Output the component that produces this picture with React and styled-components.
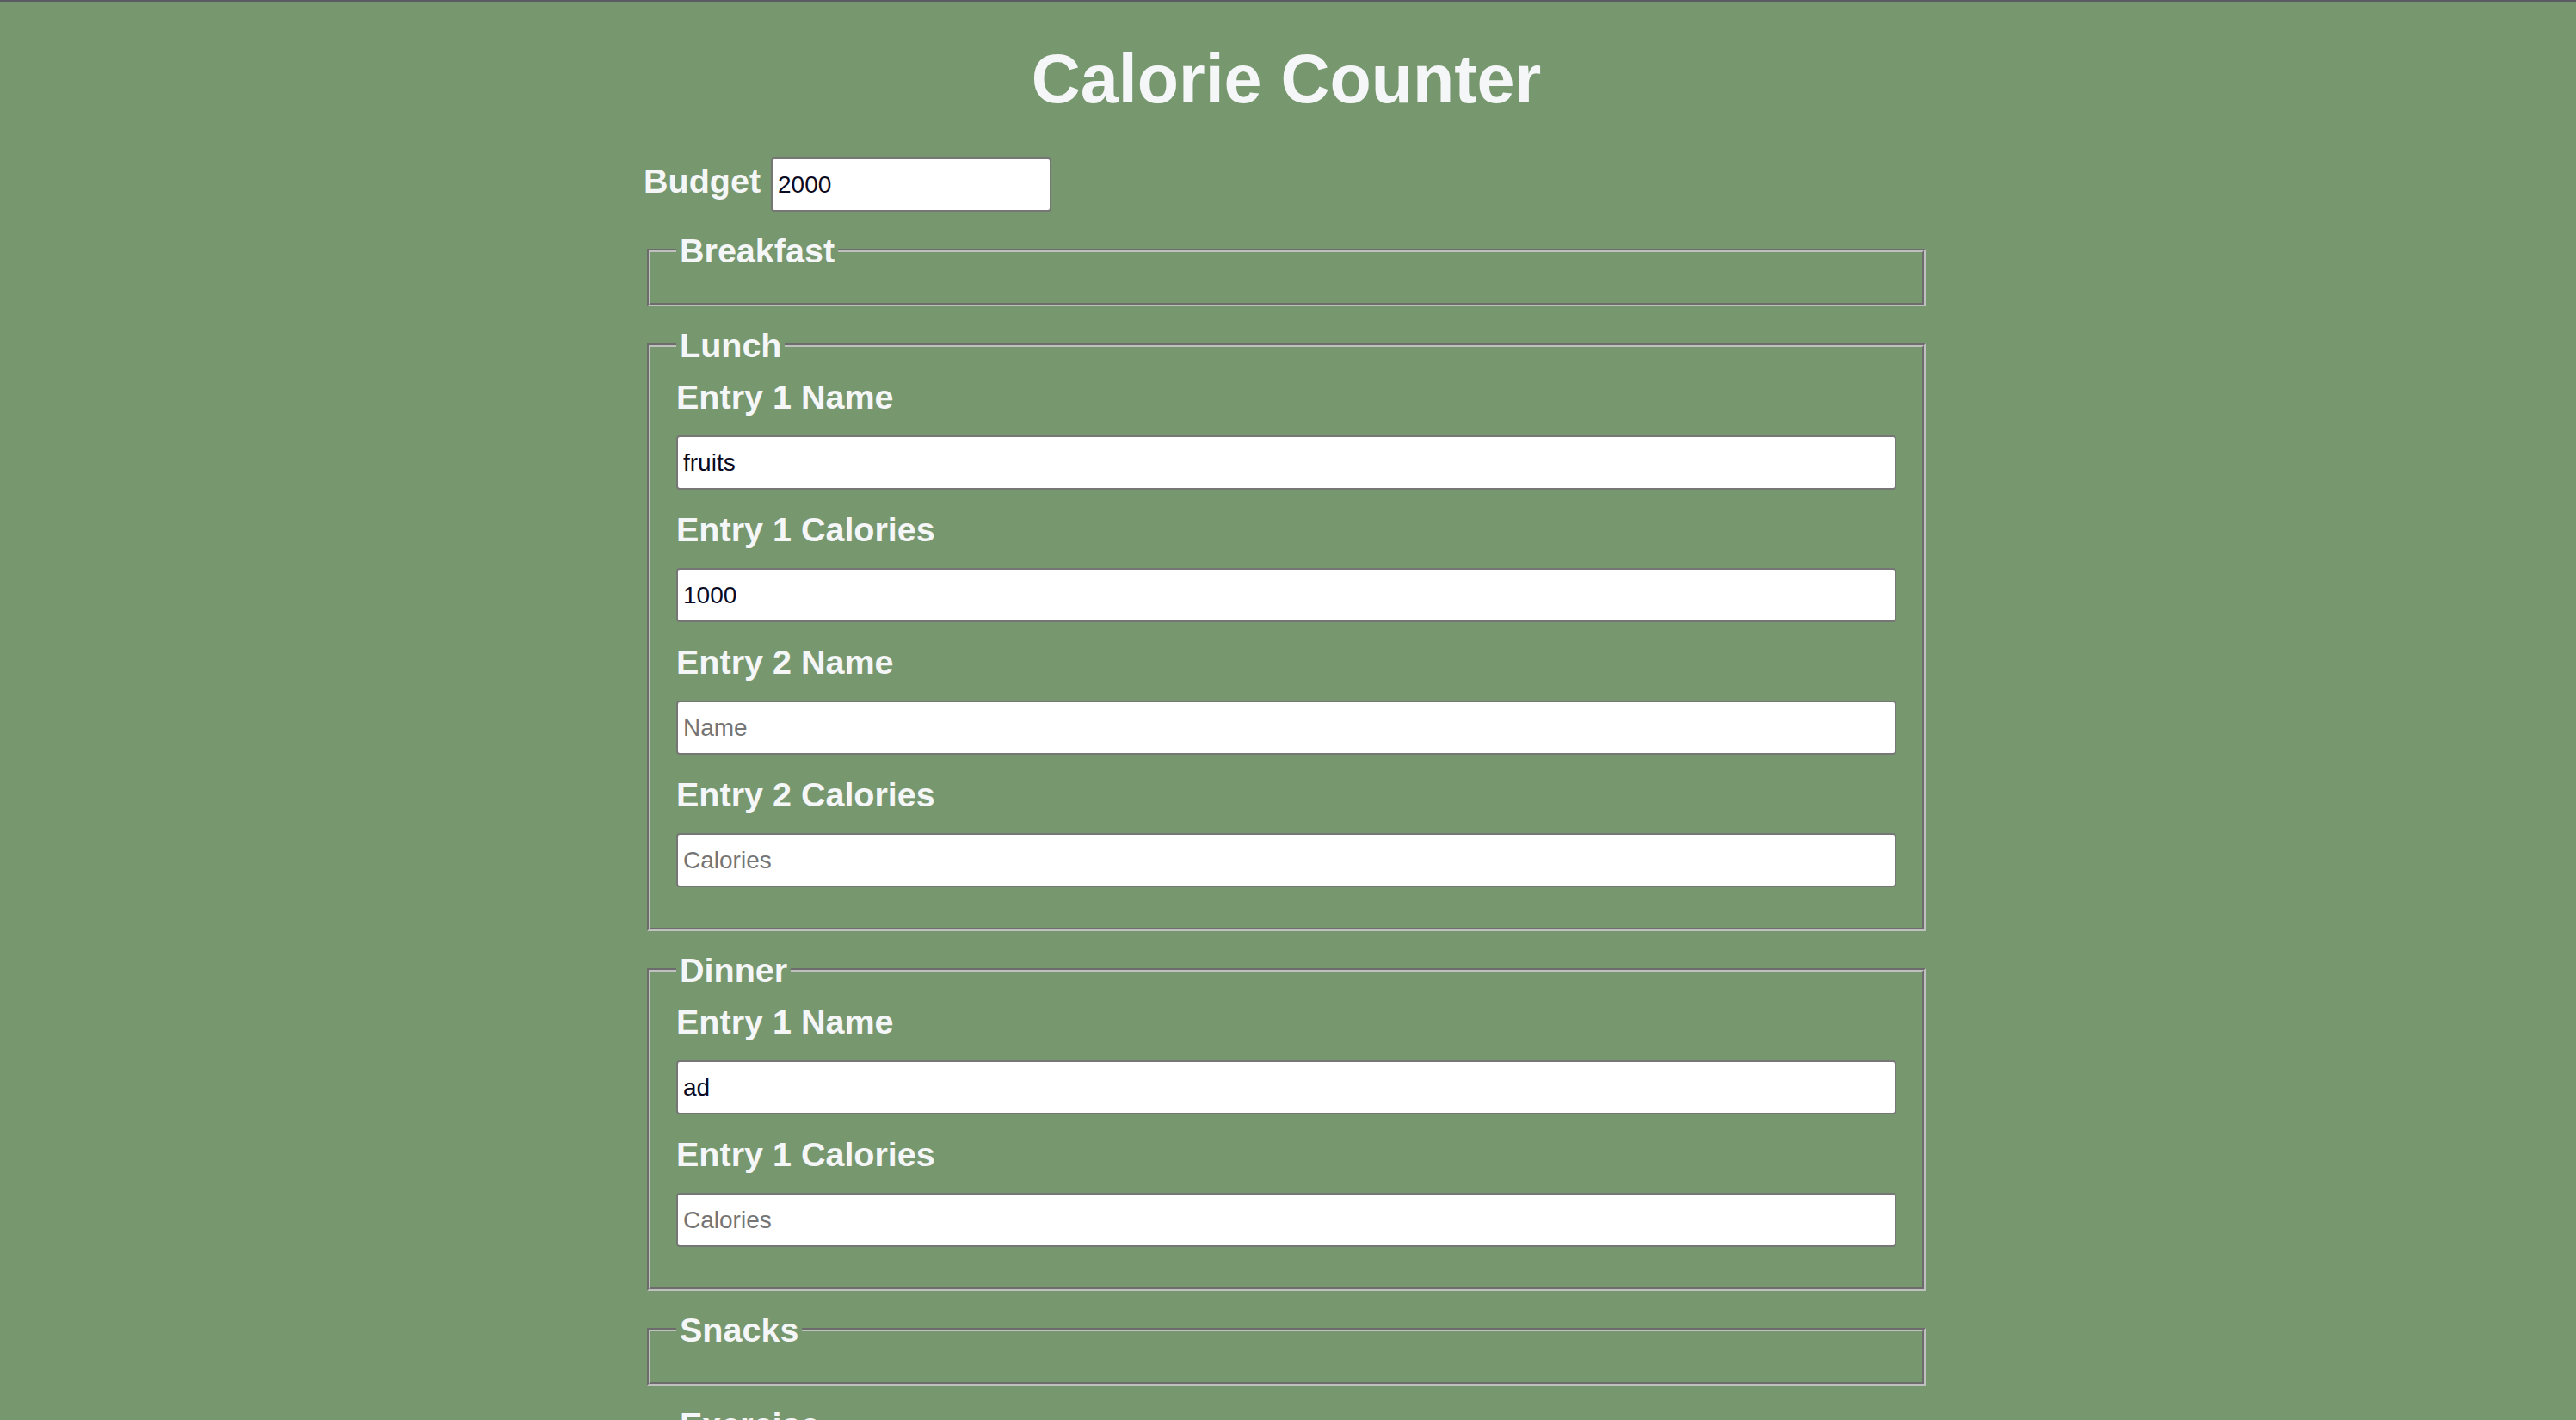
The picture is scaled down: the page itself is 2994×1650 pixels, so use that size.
import React from 'react';
import styled, { createGlobalStyle } from 'styled-components';

const GlobalStyle = createGlobalStyle`
  html, body {
    margin: 0;
    padding: 0;
  }

  body {
    background-color: #77976f;
    border-top: 2px solid #5a5a62;
    color: #f5f6f7;
    font-family: "Liberation Sans", Arial, Helvetica, sans-serif;
  }
`;

const meals = [
  { name: 'Breakfast', entries: [] },
  {
    name: 'Lunch',
    entries: [
      { name: 'fruits', calories: '1000' },
      { name: '', calories: '' },
    ],
  },
  { name: 'Dinner', entries: [{ name: 'ad', calories: '' }] },
  { name: 'Snacks', entries: [] },
  { name: 'Exercise', entries: [] },
];

export default function App() {
  return (
    <>
      <GlobalStyle />
      <Page>
        <Container>
          <Title>Calorie Counter</Title>
          <Form onSubmit={(e) => e.preventDefault()}>
            <BudgetRow>
              <Label htmlFor="budget">Budget</Label>
              <BudgetInput id="budget" type="number" defaultValue="2000" />
            </BudgetRow>
            {meals.map((meal) => (
              <MealSet key={meal.name}>
                <Legend>{meal.name}</Legend>
                {meal.entries.map((entry, i) => {
                  const id = `${meal.name.toLowerCase()}-${i + 1}`;
                  return (
                    <React.Fragment key={id}>
                      <EntryLabel htmlFor={`${id}-name`}>Entry {i + 1} Name</EntryLabel>
                      <EntryInput
                        id={`${id}-name`}
                        type="text"
                        placeholder="Name"
                        defaultValue={entry.name}
                      />
                      <EntryLabel htmlFor={`${id}-calories`}>Entry {i + 1} Calories</EntryLabel>
                      <EntryInput
                        id={`${id}-calories`}
                        type="number"
                        placeholder="Calories"
                        defaultValue={entry.calories}
                      />
                    </React.Fragment>
                  );
                })}
              </MealSet>
            ))}
          </Form>
        </Container>
      </Page>
    </>
  );
}

const Page = styled.div`
  padding-right: 4px;
`;

const Container = styled.main`
  width: 1494px;
  margin: 0 auto;
`;

const Title = styled.h1`
  margin: 44px 0 45px;
  font-size: 79px;
  line-height: 92px;
  font-weight: 700;
  text-align: center;
`;

const Form = styled.form`
  display: flex;
  flex-direction: column;
  gap: 22px;
`;

const BudgetRow = styled.div`
  display: flex;
  align-items: baseline;
  gap: 12px;
`;

const Label = styled.label`
  font-size: 39.5px;
  font-weight: 700;
  line-height: 46px;
`;

const baseInput = `
  box-sizing: border-box;
  height: 63px;
  padding: 0 6px;
  border: 2px solid #767676;
  border-radius: 4px;
  background: #ffffff;
  color: #0a0a23;
  font-family: "Liberation Sans", Arial, Helvetica, sans-serif;
  font-size: 28px;
  outline: none;

  &::placeholder {
    color: #757575;
  }

  &::-webkit-outer-spin-button,
  &::-webkit-inner-spin-button {
    -webkit-appearance: none;
    margin: 0;
  }
`;

const BudgetInput = styled.input`
  ${baseInput}
  width: 326px;
  -moz-appearance: textfield;
`;

const MealSet = styled.fieldset`
  min-width: 0;
  margin: 0 4px;
  padding: 14px 30px 24px;
  border: 4px groove rgb(192, 192, 192);
`;

const Legend = styled.legend`
  padding: 0 4px;
  font-size: 39.5px;
  font-weight: 700;
  line-height: 46px;
`;

const EntryLabel = styled(Label)`
  display: block;
  margin-bottom: 22px;
`;

const EntryInput = styled.input`
  ${baseInput}
  display: block;
  width: 100%;
  margin: 0 0 23px;
`;
